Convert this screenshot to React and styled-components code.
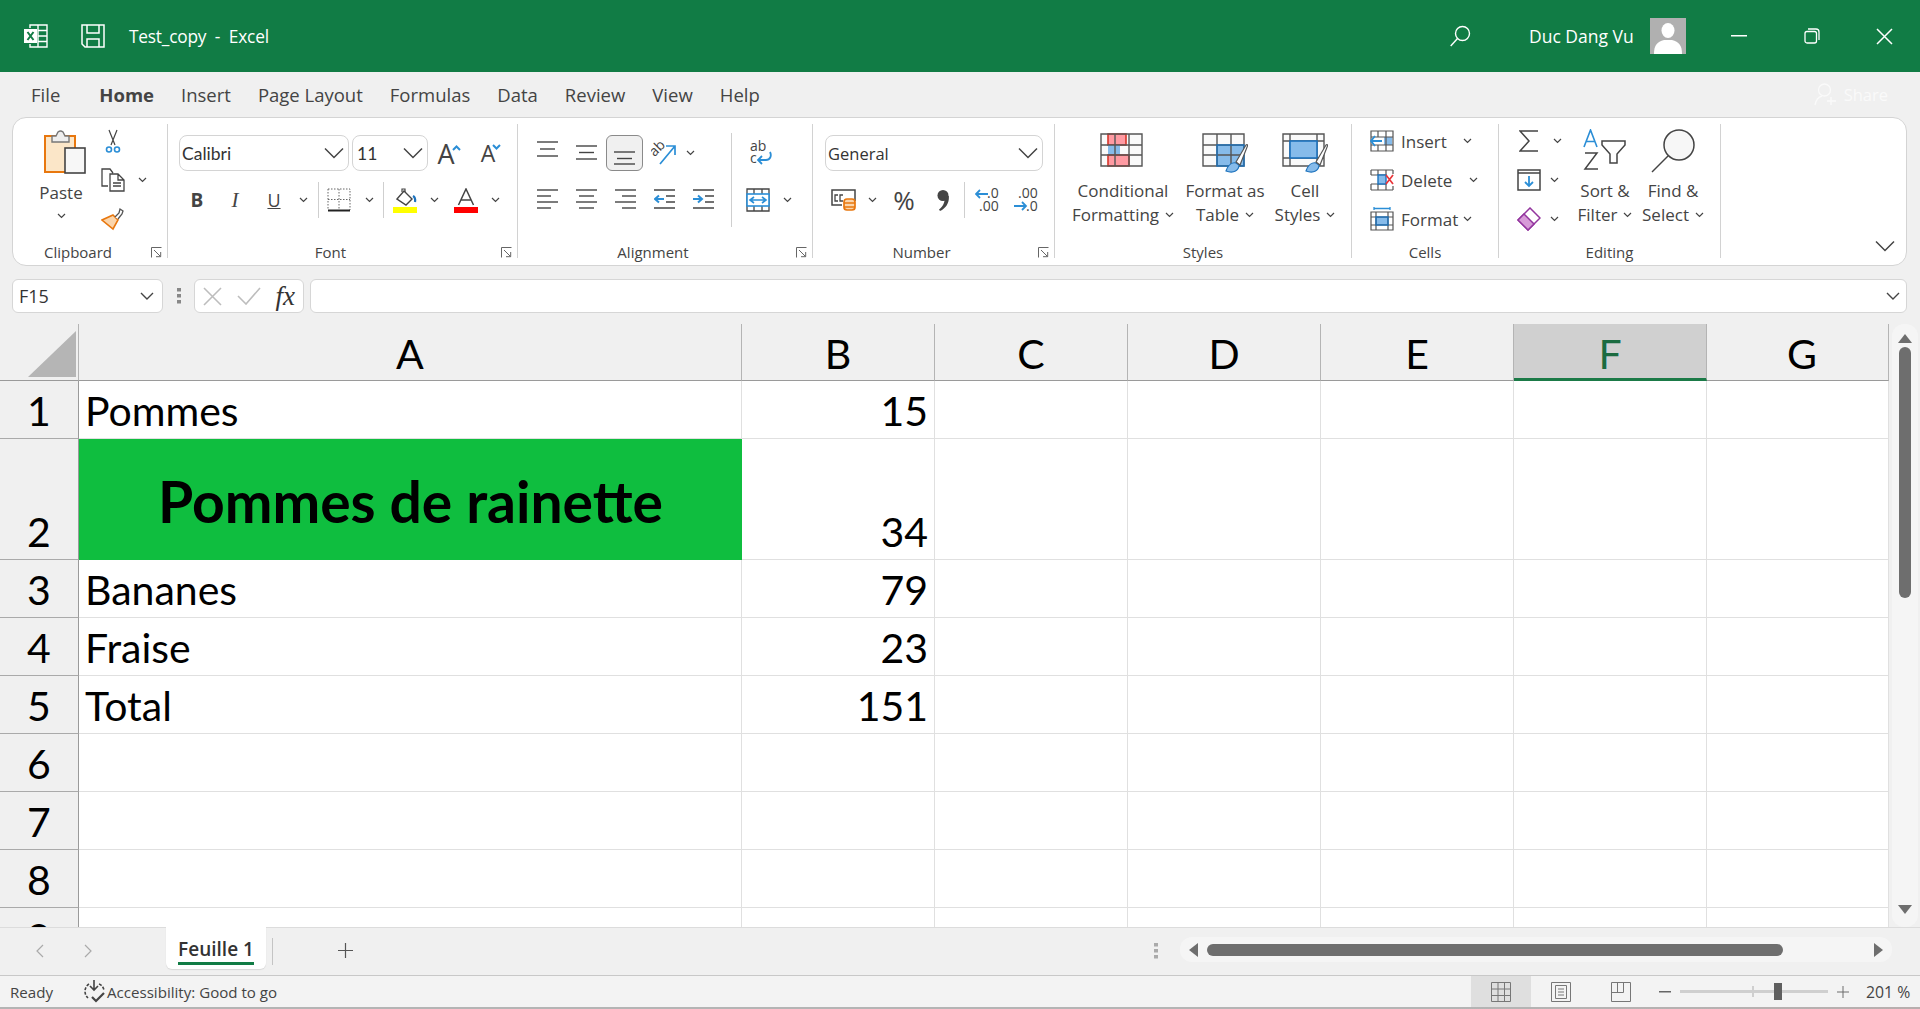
import React from 'react';
import styled, { createGlobalStyle } from 'styled-components';

const UI_FONT = '"Open Sans", "Noto Sans", sans-serif';
const SHEET_FONT = 'Lato, "Noto Sans", sans-serif';
const INK = '#444';
const BLUE = '#2b8ed6';
const FILL_BLUE = '#86bbea';
const DEEP_BLUE = '#1c72bd';
const ORANGE = '#e8770e';

const GlobalStyle = createGlobalStyle`
  html, body { margin: 0; padding: 0; height: 1009px; overflow: hidden; background: #f0f0f0; }
  * { box-sizing: border-box; }
  svg { display: block; flex: none; }
`;

const Page = styled.div`
  width: 1920px;
  height: 1009px;
  display: flex;
  flex-direction: column;
  background: #f0f0f0;
  font-family: ${UI_FONT};
  color: #333;
  overflow: hidden;
`;

/* title bar */
const TitleBar = styled.header`
  height: 72px;
  flex: none;
  background: #117c45;
  color: #fff;
  display: flex;
  align-items: center;
  padding-left: 24px;
`;
const SaveSlot = styled.div`
  margin-left: 33px;
`;
const TitleText = styled.span`
  margin-left: 24px;
  font-size: 17.3px;
  letter-spacing: -0.2px;
  white-space: pre;
`;
const Spacer = styled.div`
  flex: 1;
`;
const UserName = styled.span`
  margin-left: 58px;
  font-size: 17.5px;
  width: 121px;
  white-space: nowrap;
`;
const Avatar = styled.div`
  width: 36px;
  height: 36px;
  margin-right: 16px;
  background: #b0b0b0;
  overflow: hidden;
`;
const WinButton = styled.div`
  width: ${p => p.$w}px;
  display: flex;
  justify-content: center;
`;

/* menu */
const MenuBar = styled.nav`
  height: 45px;
  flex: none;
  display: flex;
  align-items: center;
  padding-left: 31px;
  gap: 27px;
  font-size: 18.5px;
  color: #444;
`;
const MenuItem = styled.span`
  font-weight: ${p => (p.$active ? 700 : 400)};
  margin-left: ${p => (p.$active ? 12 : 0)}px;
`;
const Share = styled.div`
  margin-left: auto;
  margin-right: 32px;
  display: flex;
  align-items: center;
  gap: 7px;
  color: #fafafa;
  font-size: 16.5px;
`;

/* ribbon */
const Ribbon = styled.section`
  height: 149px;
  flex: none;
  margin: 0 13px 0 12px;
  background: #fff;
  border: 1px solid #d4d4d4;
  border-radius: 14px;
  padding: 6px 0 7px;
  display: flex;
`;
const Group = styled.div`
  width: ${p => p.$w}px;
  flex: none;
  border-right: 1px solid #d2d2d2;
  display: flex;
  flex-direction: column;
  position: relative;
`;
const GroupBody = styled.div`
  flex: 1;
  display: flex;
  padding-left: ${p => p.$pl || 0}px;
  min-height: 0;
`;
const GroupLabel = styled.div`
  height: 16px;
  flex: none;
  text-align: center;
  font-size: 15px;
  line-height: 20px;
  color: #444;
  padding-right: ${p => (p.$launcher ? 24 : 0)}px;
`;
const Launcher = styled.div`
  position: absolute;
  right: 5px;
  bottom: 0;
`;
const Stack = styled.div`
  display: flex;
  flex-direction: column;
  width: ${p => (p.$w ? `${p.$w}px` : 'auto')};
  flex: none;
`;
const ToolRow = styled.div`
  display: flex;
  align-items: center;
  height: 36px;
  margin-top: ${p => p.$mt || 0}px;
  margin-left: ${p => p.$ml || 0}px;
`;
const Slot = styled.div`
  width: ${p => p.$w}px;
  height: 36px;
  flex: none;
  display: flex;
  align-items: center;
  justify-content: center;
  margin-left: ${p => p.$ml || 0}px;
  line-height: 1;
  font-family: ${p => (p.$serif ? '"Liberation Serif", serif' : UI_FONT)};
  font-weight: ${p => (p.$bold ? 700 : 400)};
  font-style: ${p => (p.$italic ? 'italic' : 'normal')};
  text-decoration: ${p => (p.$under ? 'underline' : 'none')};
  font-size: ${p => p.$fs || 18}px;
  color: #444;
  border: 1px solid ${p => (p.$selected ? '#8a8a8a' : 'transparent')};
  border-radius: 6px;
  background: ${p => (p.$selected ? '#f0f0f0' : 'transparent')};
`;
const Caret = styled.span`
  align-self: flex-start;
  margin: ${p => (p.$up ? 9 : 8)}px 0 0 -3px;
`;
const RowDivider = styled.div`
  width: 1px;
  height: ${p => p.$h || 36}px;
  background: #cfcfcf;
  flex: none;
  margin: ${p => p.$m || '0'};
`;
const Combo = styled.div`
  width: ${p => p.$w}px;
  height: 36px;
  flex: none;
  border: 1px solid #d4d4d4;
  border-radius: 8px;
  display: flex;
  align-items: center;
  justify-content: space-between;
  padding: 0 4px 0 2px;
  font-size: 16.5px;
  color: #333;
  margin-right: ${p => p.$mr || 0}px;
`;
const ComboText = styled.span`
  font-family: ${p => (p.$sheet ? SHEET_FONT : UI_FONT)};
  padding-left: ${p => p.$pl || 0}px;
  font-size: ${p => p.$fs || 16}px;
`;
const LargeButton = styled.div`
  width: ${p => p.$w}px;
  flex: none;
  display: flex;
  flex-direction: column;
  align-items: center;
  padding-top: ${p => p.$pt || 0}px;
  font-size: 17px;
  line-height: 24px;
  color: #444;
`;
const IconBox = styled.div`
  height: ${p => p.$h}px;
  flex: none;
  margin-left: ${p => p.$ml || 0}px;
`;
const Line = styled.div`
  display: flex;
  align-items: center;
  gap: 6px;
  white-space: nowrap;
  margin-top: ${p => p.$mt || 0}px;
`;
const ActionColumn = styled.div`
  display: flex;
  flex-direction: column;
  gap: 5px;
  width: ${p => (p.$w ? `${p.$w}px` : 'auto')};
  flex: none;
  padding-left: ${p => p.$pl || 0}px;
`;
const ActionRow = styled.div`
  height: 34px;
  display: flex;
  align-items: center;
  font-size: 17px;
  color: #444;
`;
const ActionLabel = styled.span`
  width: ${p => p.$w}px;
  margin-left: ${p => p.$ml || 7}px;
  flex: none;
  white-space: nowrap;
`;
const RibbonEnd = styled.div`
  flex: 1;
  display: flex;
  align-items: flex-end;
  justify-content: flex-end;
  padding: 0 11px 6px 0;
`;

/* formula bar */
const FormulaBar = styled.div`
  height: 34px;
  flex: none;
  margin: 13px 13px 11px 12px;
  display: flex;
  align-items: stretch;
`;
const Field = styled.div`
  background: #fff;
  border: 1px solid #d6d6d6;
  border-radius: 6px;
  display: flex;
  align-items: center;
  width: ${p => (p.$w ? `${p.$w}px` : 'auto')};
  flex: ${p => (p.$grow ? 1 : 'none')};
  padding: ${p => p.$pad || '0'};
  margin-left: ${p => p.$ml || 0}px;
  justify-content: space-between;
  font-size: 18px;
`;
const Grip = styled.div`
  width: 31px;
  flex: none;
  display: flex;
  justify-content: center;
  align-items: center;
`;

/* sheet */
const SheetArea = styled.div`
  height: 603px;
  flex: none;
  display: flex;
`;
const Sheet = styled.div`
  width: 1889px;
  height: 603px;
  overflow: hidden;
  display: grid;
  grid-template-columns: 79px 663px 193px 193px 193px 193px 193px 182px;
  grid-template-rows: 57px 58px 121px repeat(7, 58px);
  background: #fff;
  font-family: ${SHEET_FONT};
  font-size: 41px;
  color: #000;
`;
const ColHead = styled.div`
  background: ${p => (p.$selected ? '#d0d0d0' : '#f0f0f0')};
  color: ${p => (p.$selected ? '#1b6b40' : '#000')};
  border-right: 1px solid #b4b4b4;
  border-bottom: ${p => (p.$selected ? '3px solid #1b7a47' : '1px solid #9a9a9a')};
  display: flex;
  align-items: center;
  justify-content: center;
  line-height: 1;
  padding-top: ${p => (p.$selected ? 5 : 3)}px;
  padding-left: ${p => (p.$clipped ? 9 : 0)}px;
`;
const Corner = styled.div`
  background: #f0f0f0;
  border-right: 1px solid #b4b4b4;
  border-bottom: 1px solid #9a9a9a;
  display: flex;
  align-items: flex-end;
  justify-content: flex-end;
  padding: 0 2px 3px 0;
`;
const RowHead = styled.div`
  background: #f0f0f0;
  border-right: 1px solid #9a9a9a;
  border-bottom: 1px solid #aaa;
  display: flex;
  align-items: flex-end;
  justify-content: center;
  line-height: 50px;
  padding-bottom: 2px;
`;
const Cell = styled.div`
  border-right: 1px solid #e0e0e0;
  border-bottom: 1px solid #e0e0e0;
  display: flex;
  align-items: flex-end;
  justify-content: ${p => (p.$right ? 'flex-end' : 'flex-start')};
  padding: 0 6px 2px 6px;
  line-height: 50px;
  white-space: nowrap;
`;
const HeroCell = styled.div`
  background: #0fbe3f;
  display: flex;
  align-items: center;
  justify-content: center;
  font-size: 57px;
  font-weight: 700;
  line-height: 1;
  padding-top: 3px;
`;
const VScroll = styled.div`
  flex: 1;
  margin-left: 3px;
  margin-right: 2px;
  background: #f5f5f5;
  border-radius: 12px;
  display: flex;
  flex-direction: column;
  align-items: center;
  padding: 8px 0 9px;
`;
const VThumb = styled.div`
  width: 12px;
  height: 251px;
  margin-top: 1px;
  background: #6e6e6e;
  border-radius: 6px;
`;

/* tabs */
const TabBar = styled.div`
  height: 49px;
  flex: none;
  border-top: 1px solid #dcdcdc;
  border-bottom: 1px solid #c8c8c8;
  display: flex;
  align-items: flex-start;
`;
const NavArea = styled.div`
  width: 166px;
  height: 45px;
  flex: none;
  display: flex;
  align-items: center;
  padding-left: 35px;
  gap: 38px;
`;
const Tab = styled.div`
  width: 100px;
  height: 42px;
  flex: none;
  background: #fff;
  border-radius: 0 0 6px 6px;
  margin-top: -1px;
  box-shadow: 0 1px 1px #d8d8d8;
  display: flex;
  flex-direction: column;
  align-items: center;
  font-size: 19px;
  font-weight: 600;
  color: #333;
  line-height: 26px;
  padding-top: 9px;
`;
const TabUnderline = styled.div`
  width: 76px;
  height: 3px;
  flex: none;
  background: #117c45;
`;
const TabDivider = styled.div`
  width: 1px;
  height: 27px;
  background: #c4c4c4;
  margin: 10px 65px 0 6px;
  flex: none;
`;
const AddTab = styled.div`
  height: 45px;
  width: 15px;
  flex: none;
  display: flex;
  align-items: center;
`;
const HScrollGrip = styled.div`
  margin-left: auto;
  height: 45px;
  width: 48px;
  flex: none;
  display: flex;
  align-items: center;
  padding-left: 22px;
`;
const HScroll = styled.div`
  width: 712px;
  height: 25px;
  flex: none;
  margin: 9px 28px 0 0;
  background: #f5f5f5;
  border-radius: 12px;
  display: flex;
  align-items: center;
  padding: 0 5px 0 8px;
`;
const HThumb = styled.div`
  width: 576px;
  height: 12px;
  margin-left: 5px;
  background: #6e6e6e;
  border-radius: 6px;
`;

/* status */
const StatusBar = styled.footer`
  height: 31px;
  flex: none;
  background: #f3f3f3;
  display: flex;
  align-items: stretch;
  font-size: 15.1px;
  color: #444;
`;
const StatusItem = styled.div`
  display: flex;
  align-items: center;
  gap: ${p => p.$gap || 0}px;
  margin-left: ${p => p.$ml || 0}px;
  width: ${p => (p.$w ? `${p.$w}px` : 'auto')};
  flex: none;
  white-space: nowrap;
`;
const ViewButton = styled.div`
  width: 60px;
  flex: none;
  display: flex;
  align-items: center;
  justify-content: center;
  background: ${p => (p.$active ? '#dfdfdf' : 'transparent')};
`;
const ZoomTrack = styled.div`
  width: 148px;
  height: 3px;
  margin: 0 9px;
  background: #cfcfcf;
  position: relative;
  align-self: center;
  flex: none;
`;
const ZoomTick = styled.div`
  position: absolute;
  left: 72px;
  top: -4px;
  width: 2px;
  height: 11px;
  background: #cfcfcf;
`;
const ZoomThumb = styled.div`
  position: absolute;
  left: 94px;
  top: -7px;
  width: 8px;
  height: 17px;
  background: #5f5f5f;
`;
const ZoomValue = styled(StatusItem)`
  font-size: 15.8px;
`;
const BottomEdge = styled.div`
  height: 2px;
  flex: 1;
  background: linear-gradient(90deg, #b4b4b4 0%, #b4b4b4 75%, #b8aeae 100%);
`;

/* icons */
const Chev = ({ big, med, color = INK }) => {
  if (big) return <svg width="20" height="12" viewBox="0 0 20 12" fill="none" stroke={color} strokeWidth="1.5"><path d="M1 1.500l9 9 9-9" /></svg>;
  if (med) return <svg width="14" height="8" viewBox="0 0 14 8" fill="none" stroke={color} strokeWidth="1.4"><path d="M1 1l6 6 6-6" /></svg>;
  return <svg width="9" height="6" viewBox="0 0 9 6" fill="none" stroke={color} strokeWidth="1.2"><path d="M1 1l3.500 3.500L8 1" /></svg>;
};

const LauncherIcon = () => (
  <svg width="11" height="11" viewBox="0 0 11 11" fill="none" stroke="#666" strokeWidth="1"><path d="M.5 10.500V.5h10M3 3l6.500 6.500M5 9.700h4.700V5" /></svg>
);

const ExcelLogo = () => (
  <svg width="24" height="24" viewBox="0 0 24 24" fill="none" stroke="#fff" strokeWidth="1.4">
    <path d="M6 4V1h17v22H6v-3M14 1v22M14 6.500h9M14 12h9M14 17.500h9" />
    <rect x="0" y="5" width="13" height="14" fill="#fff" stroke="none" />
    <path d="M3.500 8l6 8M9.500 8l-6 8" stroke="#117c45" strokeWidth="2" />
  </svg>
);
const SaveIcon = () => (
  <svg width="24" height="24" viewBox="0 0 24 24" fill="none" stroke="#fff" strokeWidth="1.5">
    <path d="M1 1h22v22H4l-3-3zM6 1v8h12V1M6 23v-8h12v8" />
  </svg>
);
const SearchIcon = () => (
  <svg width="21" height="22" viewBox="0 0 21 22" fill="none" stroke="#fff" strokeWidth="1.4">
    <circle cx="12.500" cy="8.500" r="7" /><path d="M7.500 13.500L.7 21" />
  </svg>
);
const AvatarFigure = () => (
  <svg width="36" height="36" viewBox="0 0 36 36" fill="#fff">
    <ellipse cx="18" cy="12.500" rx="6.500" ry="7.500" />
    <path d="M4 36c0-9 3-12 10-14h8c7 2 10 5 10 14z" />
  </svg>
);
const ShareIcon = () => (
  <svg width="23" height="23" viewBox="0 0 23 23" fill="none" stroke="#fafafa" strokeWidth="1.3">
    <circle cx="10.500" cy="7" r="6" /><path d="M1 22c1-5 3-8 7-9M17 14v8M13 18h9" />
  </svg>
);

const PasteIcon = () => (
  <svg width="42" height="46" viewBox="0 0 42 46">
    <rect x="1" y="7" width="30" height="36" fill="#fbe6c8" stroke={ORANGE} strokeWidth="2" />
    <path d="M8 7V13h17V7h-4l-2-4a4 4 0 0 0-5 0l-2 4z" fill="#eee" stroke="#777" strokeWidth="1.4" />
    <rect x="21" y="19" width="20" height="25" fill="#f7f7f7" stroke={INK} strokeWidth="1.6" />
  </svg>
);
const ScissorsIcon = () => (
  <svg width="16" height="24" viewBox="0 0 16 24" fill="none">
    <path d="M4 1l6 15M12 1L6 16" stroke={INK} strokeWidth="1.2" />
    <circle cx="4" cy="20.500" r="2.500" stroke={BLUE} strokeWidth="1.6" />
    <circle cx="12" cy="20.500" r="2.500" stroke={BLUE} strokeWidth="1.6" />
  </svg>
);
const CopyIcon = () => (
  <svg width="24" height="24" viewBox="0 0 24 24" fill="none" stroke={INK} strokeWidth="1.3">
    <path d="M7 18H1V1h8l3 4M9 6h8l6 6v11H9zM17 6v6h6M12 15h8M12 18h8" />
  </svg>
);
const BrushIcon = () => (
  <svg width="24" height="24" viewBox="0 0 24 24" fill="none">
    <path d="M12 8l5 5-5 9-11-9z" fill="#fbd5ab" stroke={ORANGE} strokeWidth="1.6" />
    <path d="M14 10l4-4 1-4 3 2-1 3-4 5" fill="#fff" stroke="#555" strokeWidth="1.3" />
  </svg>
);
const CaretMark = ({ up }) => (
  <svg width="9" height="6" viewBox="0 0 9 6" fill="none" stroke={BLUE} strokeWidth="2"><path d={up ? 'M1 5l3.500-3.500L8 5' : 'M1 1l3.500 3.500L8 1'} /></svg>
);
const BorderIcon = () => (
  <svg width="24" height="24" viewBox="0 0 24 24" fill="none" stroke="#666" strokeDasharray="1.500 1.500">
    <path d="M1 1h22v21M1 1v21M12 1v21M1 11.500h22" />
    <path d="M1 22.500h22" stroke="#222" strokeWidth="2" strokeDasharray="none" />
  </svg>
);
const FillIcon = () => (
  <svg width="24" height="25" viewBox="0 0 24 25">
    <path d="M4 11l7-8 8 8-6 6z" fill="none" stroke={INK} strokeWidth="1.4" />
    <path d="M9 4V1h3v3" fill="none" stroke={INK} strokeWidth="1.2" />
    <path d="M20 8c2 1 2.500 3 2 6" fill="none" stroke={DEEP_BLUE} strokeWidth="2.200" />
    <rect x="0" y="19" width="24" height="6" fill="#ff0" />
  </svg>
);
const FontColorIcon = () => (
  <svg width="24" height="25" viewBox="0 0 24 25">
    <path d="M4.500 17L12 1l7.500 16M7 12h10" fill="none" stroke={INK} strokeWidth="1.500" />
    <rect x="0" y="19" width="24" height="6" fill="#f00" />
  </svg>
);

const Lines = ({ rows }) => (
  <svg width="22" height="24" viewBox="0 0 22 24" fill="none" stroke={INK} strokeWidth="1.4">
    {rows.map(([x1, y, x2]) => <path key={`${x1}-${y}`} d={`M${x1} ${y}H${x2}`} />)}
  </svg>
);
const alignTop = [[0, 1, 21], [3, 8, 18], [0, 15, 21]];
const alignMiddle = [[0, 5, 21], [3, 11.500, 18], [0, 18, 21]];
const alignBottom = [[0, 11, 21], [3, 17.500, 18], [0, 23, 21]];
const alignLeft = [[0, 2, 21], [0, 8, 14], [0, 14, 21], [0, 20, 14]];
const alignCenter = [[0, 2, 21], [3, 8, 18], [0, 14, 21], [3, 20, 18]];
const alignRight = [[0, 2, 21], [7, 8, 21], [0, 14, 21], [7, 20, 21]];

const IndentIcon = ({ out }) => (
  <svg width="22" height="24" viewBox="0 0 22 24" fill="none" stroke={INK} strokeWidth="1.4">
    <path d="M0 2h21M12 8h9M12 14h9M0 20h21" />
    <path d={out ? 'M10 11H1M5 7.500L1 11l4 3.500' : 'M0 11h9M5 7.500L9 11l-4 3.500'} stroke={BLUE} strokeWidth="2" />
  </svg>
);
const OrientationIcon = () => (
  <svg width="26" height="26" viewBox="0 0 26 26" fill="none">
    <text x="0" y="13" fontFamily={UI_FONT} fontSize="14" fill={INK} transform="rotate(-45 7 11)">ab</text>
    <path d="M9 24L24 6M15 6h9v9" stroke={BLUE} strokeWidth="1.700" />
  </svg>
);
const WrapIcon = () => (
  <svg width="24" height="26" viewBox="0 0 24 26" fill="none">
    <text x="1" y="11" fontFamily={UI_FONT} fontSize="14" fill={INK}>ab</text>
    <text x="1" y="23" fontFamily={UI_FONT} fontSize="14" fill={INK}>c</text>
    <path d="M21 12c2 4 0 8-4 8H9M13 16l-4 4 4 4" stroke={BLUE} strokeWidth="1.800" />
  </svg>
);
const MergeIcon = () => (
  <svg width="24" height="24" viewBox="0 0 24 24" fill="none">
    <path d="M1 1h22v22H1zM8 1v5M16 1v5M8 18v5M16 18v5" stroke={INK} strokeWidth="1.300" />
    <rect x="1" y="6" width="22" height="12" fill="#fff" stroke={BLUE} strokeWidth="1.600" />
    <path d="M4 12h16M8 9l-4 3 4 3M16 9l4 3-4 3" stroke={BLUE} strokeWidth="1.600" />
  </svg>
);
const AccountingIcon = () => (
  <svg width="25" height="22" viewBox="0 0 25 22" fill="none">
    <path d="M19 1H1v15h10" stroke={INK} strokeWidth="1.500" />
    <path d="M24 12V1h-5" stroke={INK} strokeWidth="1.500" />
    <path d="M7 6H4v6h3M12 6H9v6h3" stroke={INK} strokeWidth="1.300" />
    <rect x="13" y="10" width="11" height="11" rx="3" fill="#fbd5ab" stroke={ORANGE} strokeWidth="1.700" />
    <path d="M13 14h11M13 18h11" stroke={ORANGE} strokeWidth="1.500" />
  </svg>
);
const CommaIcon = () => (
  <svg width="12" height="21" viewBox="0 0 12 21" fill={INK}>
    <circle cx="6" cy="5.500" r="5.500" />
    <path d="M8 6h3.800c.7 6-2.300 12-8.800 15l-1-1.500c3.500-2.500 6-6.500 6-13.500z" />
  </svg>
);
const DecimalIcon = ({ inc }) => (
  <svg width="24" height="26" viewBox="0 0 24 26" fill="none">
    <text x={inc ? 12 : 4} y="11" fontFamily={UI_FONT} fontSize="14" fill={INK}>{inc ? '.0' : '.00'}</text>
    <text x={inc ? 4 : 12} y="24" fontFamily={UI_FONT} fontSize="14" fill={INK}>{inc ? '.00' : '.0'}</text>
    <path d={inc ? 'M13 7H1M5 3L1 7l4 4' : 'M0 19h12M8 15l4 4-4 4'} stroke={BLUE} strokeWidth="1.800" />
  </svg>
);

const TableBase = ({ children }) => (
  <svg width="46" height="42" viewBox="0 0 46 42">
    <rect x="1" y="1" width="41" height="32" fill="#fafafa" />
    {children}
    <path d="M1 1h41v32H1zM1 12h41M1 22h41M15 1v32M29 1v32" fill="none" stroke="#555" strokeWidth="1.400" />
  </svg>
);
const Paintbrush = () => (
  <>
    <path d="M24 38c2-6 6-9 10-8l3 2c0 5-5 9-13 6z" fill={FILL_BLUE} stroke={DEEP_BLUE} strokeWidth="1.200" />
    <path d="M34 29L44 12c1-1 2 0 1.500 1L38 32z" fill="#fff" stroke="#555" strokeWidth="1.200" />
  </>
);
const ConditionalIcon = () => (
  <TableBase>
    <rect x="8" y="1" width="18" height="11" fill="#ff9aa2" stroke="#d8352a" strokeWidth="1.600" />
    <rect x="8" y="12" width="12" height="10" fill={FILL_BLUE} />
    <rect x="8" y="22" width="21" height="11" fill="#ff9aa2" stroke="#d8352a" strokeWidth="1.600" />
  </TableBase>
);
const FormatTableIcon = () => (
  <svg width="46" height="42" viewBox="0 0 46 42">
    <rect x="1" y="1" width="41" height="32" fill="#fafafa" />
    <rect x="15" y="12" width="27" height="21" fill={FILL_BLUE} />
    <path d="M1 1h41v32H1zM1 12h41M1 22h41M15 1v32M29 1v32" fill="none" stroke="#555" strokeWidth="1.400" />
    <rect x="15" y="12" width="27" height="21" fill="none" stroke={DEEP_BLUE} strokeWidth="1.400" />
    <Paintbrush />
  </svg>
);
const CellStylesIcon = () => (
  <svg width="46" height="42" viewBox="0 0 46 42">
    <rect x="1" y="1" width="41" height="32" fill="#fafafa" />
    <path d="M1 1h41v32H1zM1 8h41M1 25h41M8 1v32M35 1v32" fill="none" stroke="#555" strokeWidth="1.400" />
    <rect x="8" y="8" width="27" height="17" fill={FILL_BLUE} stroke={DEEP_BLUE} strokeWidth="1.600" />
    <Paintbrush />
  </svg>
);
const InsertIcon = () => (
  <svg width="24" height="22" viewBox="0 0 24 22" fill="none">
    <rect x="14" y="7" width="8" height="8" fill={FILL_BLUE} />
    <path d="M1 1h22v20H1zM8 1v6M16 1v20M1 7h22M1 15h22M8 15v6" stroke="#555" strokeWidth="1.200" />
    <path d="M12 11H1M5 6l-4 5 4 5" stroke={BLUE} strokeWidth="1.800" />
  </svg>
);
const DeleteIcon = () => (
  <svg width="24" height="22" viewBox="0 0 24 22" fill="none">
    <path d="M1 1h22M1 21h22M1 1v5M1 15v6M8 1v5M16 1v5M8 15v6M16 15v6M1 6h15M1 15h15M23 1v4M23 17v4" stroke="#555" strokeWidth="1.200" />
    <rect x="8" y="6" width="8" height="9" fill={FILL_BLUE} stroke={DEEP_BLUE} strokeWidth="1.400" />
    <path d="M16 6l7 9M23 6l-7 9" stroke="#e8353a" strokeWidth="1.700" />
  </svg>
);
const FormatCellIcon = () => (
  <svg width="24" height="24" viewBox="0 0 24 24" fill="none">
    <path d="M4 1.500h16M4 0v3M20 0v3" stroke={BLUE} strokeWidth="1.300" />
    <rect x="6" y="10" width="12" height="8" fill={FILL_BLUE} />
    <path d="M1 5h22v18H1zM1 10h22M1 18h22M6 5v18M18 5v18" stroke="#555" strokeWidth="1.200" />
    <rect x="6" y="10" width="12" height="8" stroke={DEEP_BLUE} strokeWidth="1.400" />
  </svg>
);
const SigmaIcon = () => (
  <svg width="20" height="22" viewBox="0 0 20 22" fill="none" stroke={INK} strokeWidth="1.500"><path d="M19 1H1l9 10-9 10h18" /></svg>
);
const FillDownIcon = () => (
  <svg width="24" height="22" viewBox="0 0 24 22" fill="none">
    <path d="M1 1h22v20H1zM1 4h22" stroke={INK} strokeWidth="1.500" />
    <path d="M12 7v10M8 13l4 4 4-4" stroke={BLUE} strokeWidth="1.800" />
  </svg>
);
const EraserIcon = () => (
  <svg width="24" height="24" viewBox="0 0 24 24">
    <path d="M1 13L13 1l10 10-12 12z" fill="#fff" stroke="#93359e" strokeWidth="1.500" />
    <path d="M1 13l6-6 10 10-6 6z" fill="#d79bd8" stroke="#93359e" strokeWidth="1.500" />
  </svg>
);
const SortFilterIcon = () => (
  <svg width="44" height="42" viewBox="0 0 44 42" fill="none">
    <path d="M1 18L7.500 1 14 18M3.500 12.500h8" stroke={BLUE} strokeWidth="1.600" />
    <path d="M2 24h12L2 40h13" stroke={INK} strokeWidth="1.500" />
    <path d="M19 12h23v4l-8 9v9h-7v-9l-8-9z" stroke={INK} strokeWidth="1.500" />
  </svg>
);
const FindIcon = () => (
  <svg width="44" height="44" viewBox="0 0 44 44" fill="none" stroke={INK} strokeWidth="1.500">
    <circle cx="28" cy="16" r="15" fill="#f7f7f7" />
    <path d="M17 27L1 43" />
  </svg>
);
const FxLabel = styled.span`
  font-family: "Liberation Serif", serif;
  font-style: italic;
  font-size: 27px;
  line-height: 1;
  color: #333;
`;
const FormulaCancel = () => (
  <svg width="19" height="19" viewBox="0 0 19 19" fill="none" stroke="#bdbdbd" strokeWidth="1.600"><path d="M1 1l17 17M18 1L1 18" /></svg>
);
const FormulaEnter = () => (
  <svg width="24" height="18" viewBox="0 0 24 18" fill="none" stroke="#bdbdbd" strokeWidth="1.600"><path d="M1 9l8 8L23 1" /></svg>
);
const GripDots = ({ color = '#888' }) => (
  <svg width="4" height="16" viewBox="0 0 4 16" fill={color}>
    <rect width="4" height="3.500" /><rect y="6" width="4" height="3.500" /><rect y="12" width="4" height="3.500" />
  </svg>
);
const CornerMark = () => (
  <svg width="48" height="46" viewBox="0 0 48 46"><path d="M48 0v46H0z" fill="#b5b5b5" /></svg>
);
const Arrow = ({ dir }) => {
  const d = { up: 'M0 11L7 2l7 9z', down: 'M0 1l7 9 7-9z', left: 'M10 0L1 7l9 7z', right: 'M1 0l9 7-9 7z' }[dir];
  return <svg width="14" height="14" viewBox="0 0 14 14" fill="#6e6e6e"><path d={d} /></svg>;
};
const Nav = ({ right }) => (
  <svg width="10" height="14" viewBox="0 0 10 14" fill="none" stroke="#aaa" strokeWidth="1.200"><path d={right ? 'M2 1l6 6-6 6' : 'M8 1L2 7l6 6'} /></svg>
);
const PlusIcon = ({ size = 15, color = '#555' }) => (
  <svg width={size} height={size} viewBox="0 0 15 15" fill="none" stroke={color} strokeWidth="1.200"><path d="M7.500 0v15M0 7.500h15" /></svg>
);
const AccessIcon = () => (
  <svg width="23" height="23" viewBox="0 0 23 23" fill="none" stroke={INK} strokeWidth="1.600">
    <path d="M6 4a9 9 0 0 0-4 7c0 3 1 5 3 7M16 4c3 1 5 4 5 7" strokeDasharray="3 1.500" />
    <path d="M11 0v9M7 6l4 4 4-4" />
    <path d="M9 17l4 4 8-8" strokeWidth="2.200" />
  </svg>
);
const NormalViewIcon = () => (
  <svg width="20" height="20" viewBox="0 0 20 20" fill="none" stroke="#777"><path d="M.5.5h19v19H.5zM.5 7h19M.5 13.500h19M7 .5v19M13.500.5v19" /></svg>
);
const PageViewIcon = () => (
  <svg width="20" height="20" viewBox="0 0 20 20" fill="none" stroke="#777"><path d="M.5.5h19v19H.5zM4.500 3.500h11v13h-11zM7 7h6M7 10h6M7 13h6" /></svg>
);
const BreakViewIcon = () => (
  <svg width="20" height="20" viewBox="0 0 20 20" fill="none" stroke="#777"><path d="M.5.5h19v19H.5zM.5 10.500h12V.5M6.500.5v10" /></svg>
);

const COLUMNS = ['A', 'B', 'C', 'D', 'E', 'F', 'G'];
const ROWS = [
  { n: 1, a: 'Pommes', b: '15' },
  { n: 2, a: 'Pommes de rainette', b: '34', hero: true },
  { n: 3, a: 'Bananes', b: '79' },
  { n: 4, a: 'Fraise', b: '23' },
  { n: 5, a: 'Total', b: '151' },
  { n: 6 }, { n: 7 }, { n: 8 }, { n: 9 },
];

function Clipboard() {
  return (
    <Group $w={155}>
      <GroupBody $pl={8}>
        <LargeButton $w={80} $pt={5}>
          <IconBox $h={46} $ml={7}><PasteIcon /></IconBox>
          <Line $mt={6}>Paste</Line>
          <Line $mt={8}><Chev /></Line>
        </LargeButton>
        <ActionColumn>
          <ActionRow><Slot $w={24}><ScissorsIcon /></Slot></ActionRow>
          <ActionRow><CopyIcon /><ActionLabel $w={0} $ml={13} /><Chev /></ActionRow>
          <ActionRow><BrushIcon /></ActionRow>
        </ActionColumn>
      </GroupBody>
      <GroupLabel $launcher>Clipboard</GroupLabel>
      <Launcher><LauncherIcon /></Launcher>
    </Group>
  );
}

function FontGroup() {
  return (
    <Group $w={350}>
      <GroupBody $pl={11}>
        <Stack>
          <ToolRow $mt={11}>
            <Combo $w={170} $mr={3}><ComboText $sheet $fs={17.500}>Calibri</ComboText><Chev big /></Combo>
            <Combo $w={76}><ComboText $sheet $fs={17.500} $pl={2}>11</ComboText><Chev big /></Combo>
            <Slot $w={42} $fs={27}>A<Caret $up><CaretMark up /></Caret></Slot>
            <Slot $w={42} $fs={23}>A<Caret><CaretMark /></Caret></Slot>
          </ToolRow>
          <ToolRow $mt={11}>
            <Slot $w={36} $bold $fs={19}>B</Slot>
            <Slot $w={40} $italic $serif $fs={21}>I</Slot>
            <Slot $w={38} $under $fs={18}>U</Slot>
            <Slot $w={20}><Chev /></Slot>
            <RowDivider $m="0 0 0 5px" />
            <Slot $w={40}><BorderIcon /></Slot>
            <Slot $w={20}><Chev /></Slot>
            <RowDivider $m="0 3px 0 4px" />
            <Slot $w={36}><FillIcon /></Slot>
            <Slot $w={22}><Chev /></Slot>
            <Slot $w={42}><FontColorIcon /></Slot>
            <Slot $w={16}><Chev /></Slot>
          </ToolRow>
        </Stack>
      </GroupBody>
      <GroupLabel $launcher>Font</GroupLabel>
      <Launcher><LauncherIcon /></Launcher>
    </Group>
  );
}

function Alignment() {
  return (
    <Group $w={295}>
      <GroupBody $pl={11}>
        <Stack $w={202}>
          <ToolRow $mt={11} $ml={-1}>
            <Slot $w={39}><Lines rows={alignTop} /></Slot>
            <Slot $w={39}><Lines rows={alignMiddle} /></Slot>
            <Slot $w={37} $selected><Lines rows={alignBottom} /></Slot>
            <Slot $w={41}><OrientationIcon /></Slot>
            <Slot $w={12}><Chev /></Slot>
          </ToolRow>
          <ToolRow $mt={11} $ml={-1}>
            <Slot $w={39}><Lines rows={alignLeft} /></Slot>
            <Slot $w={39}><Lines rows={alignCenter} /></Slot>
            <Slot $w={39}><Lines rows={alignRight} /></Slot>
            <Slot $w={39}><IndentIcon out /></Slot>
            <Slot $w={39}><IndentIcon /></Slot>
          </ToolRow>
        </Stack>
        <RowDivider $h={94} $m="9px 0 0" />
        <Stack>
          <ToolRow $mt={11} $ml={17}><WrapIcon /></ToolRow>
          <ToolRow $mt={11} $ml={14}>
            <MergeIcon />
            <Slot $w={36} $ml={-1}><Chev /></Slot>
          </ToolRow>
        </Stack>
      </GroupBody>
      <GroupLabel $launcher>Alignment</GroupLabel>
      <Launcher><LauncherIcon /></Launcher>
    </Group>
  );
}

function NumberGroup() {
  return (
    <Group $w={242}>
      <GroupBody $pl={12}>
        <Stack>
          <ToolRow $mt={11}>
            <Combo $w={218}><ComboText $fs={16.500}>General</ComboText><Chev big /></Combo>
          </ToolRow>
          <ToolRow $mt={11}>
            <Slot $w={36}><AccountingIcon /></Slot>
            <Slot $w={22}><Chev /></Slot>
            <Slot $w={42} $fs={26}>%</Slot>
            <Slot $w={36}><CommaIcon /></Slot>
            <RowDivider $m="0 3px" />
            <Slot $w={38}><DecimalIcon inc /></Slot>
            <Slot $w={40}><DecimalIcon /></Slot>
          </ToolRow>
        </Stack>
      </GroupBody>
      <GroupLabel $launcher>Number</GroupLabel>
      <Launcher><LauncherIcon /></Launcher>
    </Group>
  );
}

function Styles() {
  return (
    <Group $w={297}>
      <GroupBody $pl={13}>
        <LargeButton $w={110} $pt={9}>
          <IconBox $h={46}><ConditionalIcon /></IconBox>
          <Line>Conditional</Line>
          <Line>Formatting <Chev /></Line>
        </LargeButton>
        <LargeButton $w={94} $pt={9}>
          <IconBox $h={46}><FormatTableIcon /></IconBox>
          <Line>Format as</Line>
          <Line>Table <Chev /></Line>
        </LargeButton>
        <LargeButton $w={66} $pt={9}>
          <IconBox $h={46}><CellStylesIcon /></IconBox>
          <Line>Cell</Line>
          <Line>Styles <Chev /></Line>
        </LargeButton>
      </GroupBody>
      <GroupLabel>Styles</GroupLabel>
    </Group>
  );
}

function Cells() {
  return (
    <Group $w={147}>
      <GroupBody>
        <ActionColumn $pl={18}>
          <ActionRow><InsertIcon /><ActionLabel $w={62}>Insert</ActionLabel><Chev /></ActionRow>
          <ActionRow><DeleteIcon /><ActionLabel $w={68}>Delete</ActionLabel><Chev /></ActionRow>
          <ActionRow><FormatCellIcon /><ActionLabel $w={62}>Format</ActionLabel><Chev /></ActionRow>
        </ActionColumn>
      </GroupBody>
      <GroupLabel>Cells</GroupLabel>
    </Group>
  );
}

function Editing() {
  return (
    <Group $w={222}>
      <GroupBody>
        <ActionColumn $w={72} $pl={18}>
          <ActionRow><Slot $w={24}><SigmaIcon /></Slot><ActionLabel $w={8} $ml={4} /><Chev /></ActionRow>
          <ActionRow><FillDownIcon /><ActionLabel $w={5} $ml={4} /><Chev /></ActionRow>
          <ActionRow><EraserIcon /><ActionLabel $w={5} $ml={4} /><Chev /></ActionRow>
        </ActionColumn>
        <LargeButton $w={68} $pt={5}>
          <IconBox $h={50}><SortFilterIcon /></IconBox>
          <Line>Sort &amp;</Line>
          <Line>Filter <Chev /></Line>
        </LargeButton>
        <LargeButton $w={68} $pt={5}>
          <IconBox $h={50}><FindIcon /></IconBox>
          <Line>Find &amp;</Line>
          <Line>Select <Chev /></Line>
        </LargeButton>
      </GroupBody>
      <GroupLabel>Editing</GroupLabel>
    </Group>
  );
}

export default function App() {
  return (
    <Page>
      <GlobalStyle />
      <TitleBar>
        <ExcelLogo />
        <SaveSlot><SaveIcon /></SaveSlot>
        <TitleText>Test_copy  -  Excel</TitleText>
        <Spacer />
        <SearchIcon />
        <UserName>Duc Dang Vu</UserName>
        <Avatar><AvatarFigure /></Avatar>
        <WinButton $w={74}>
          <svg width="16" height="2" viewBox="0 0 16 2"><rect width="16" height="1.500" fill="#fff" /></svg>
        </WinButton>
        <WinButton $w={72}>
          <svg width="16" height="16" viewBox="0 0 16 16" fill="none" stroke="#fff" strokeWidth="1.300"><rect x="1" y="3.500" width="11.500" height="11.500" rx="2" /><path d="M4 1h8a3 3 0 0 1 3 3v8" /></svg>
        </WinButton>
        <WinButton $w={72}>
          <svg width="17" height="17" viewBox="0 0 17 17" fill="none" stroke="#fff" strokeWidth="1.500"><path d="M1 1l15 15M16 1L1 16" /></svg>
        </WinButton>
      </TitleBar>

      <MenuBar>
        <MenuItem>File</MenuItem>
        <MenuItem $active>Home</MenuItem>
        <MenuItem>Insert</MenuItem>
        <MenuItem>Page Layout</MenuItem>
        <MenuItem>Formulas</MenuItem>
        <MenuItem>Data</MenuItem>
        <MenuItem>Review</MenuItem>
        <MenuItem>View</MenuItem>
        <MenuItem>Help</MenuItem>
        <Share><ShareIcon />Share</Share>
      </MenuBar>

      <Ribbon>
        <Clipboard />
        <FontGroup />
        <Alignment />
        <NumberGroup />
        <Styles />
        <Cells />
        <Editing />
        <RibbonEnd><Chev big /></RibbonEnd>
      </Ribbon>

      <FormulaBar>
        <Field $w={151} $pad="0 8px 0 6px">F15<Chev med /></Field>
        <Grip><GripDots /></Grip>
        <Field $w={110} $pad="0 8px 0 8px">
          <FormulaCancel /><FormulaEnter /><FxLabel>fx</FxLabel>
        </Field>
        <Field $grow $ml={6} $pad="0 6px 0 0"><span /><Chev med /></Field>
      </FormulaBar>

      <SheetArea>
        <Sheet>
          <Corner><CornerMark /></Corner>
          {COLUMNS.map(c => <ColHead key={c} $selected={c === 'F'} $clipped={c === 'G'}>{c}</ColHead>)}
          {ROWS.map(r => (
            <React.Fragment key={r.n}>
              <RowHead>{r.n}</RowHead>
              {r.hero ? <HeroCell>{r.a}</HeroCell> : <Cell>{r.a}</Cell>}
              <Cell $right>{r.b}</Cell>
              {COLUMNS.slice(2).map(c => <Cell key={c} />)}
            </React.Fragment>
          ))}
        </Sheet>
        <VScroll>
          <Arrow dir="up" />
          <VThumb />
          <Spacer />
          <Arrow dir="down" />
        </VScroll>
      </SheetArea>

      <TabBar>
        <NavArea><Nav /><Nav right /></NavArea>
        <Tab>Feuille 1<TabUnderline /></Tab>
        <TabDivider />
        <AddTab><PlusIcon /></AddTab>
        <HScrollGrip><GripDots color="#aaa" /></HScrollGrip>
        <HScroll>
          <Arrow dir="left" />
          <HThumb />
          <Spacer />
          <Arrow dir="right" />
        </HScroll>
      </TabBar>

      <StatusBar>
        <StatusItem $ml={10} $w={73}>Ready</StatusItem>
        <StatusItem $gap={1}><AccessIcon />Accessibility: Good to go</StatusItem>
        <Spacer />
        <ViewButton $active><NormalViewIcon /></ViewButton>
        <ViewButton><PageViewIcon /></ViewButton>
        <ViewButton><BreakViewIcon /></ViewButton>
        <StatusItem $ml={8}><svg width="12" height="2" viewBox="0 0 12 2"><rect width="12" height="1.500" fill="#666" /></svg></StatusItem>
        <ZoomTrack><ZoomTick /><ZoomThumb /></ZoomTrack>
        <StatusItem><PlusIcon size={12} color="#666" /></StatusItem>
        <ZoomValue $ml={17} $w={54}>201 %</ZoomValue>
      </StatusBar>
      <BottomEdge />
    </Page>
  );
}
